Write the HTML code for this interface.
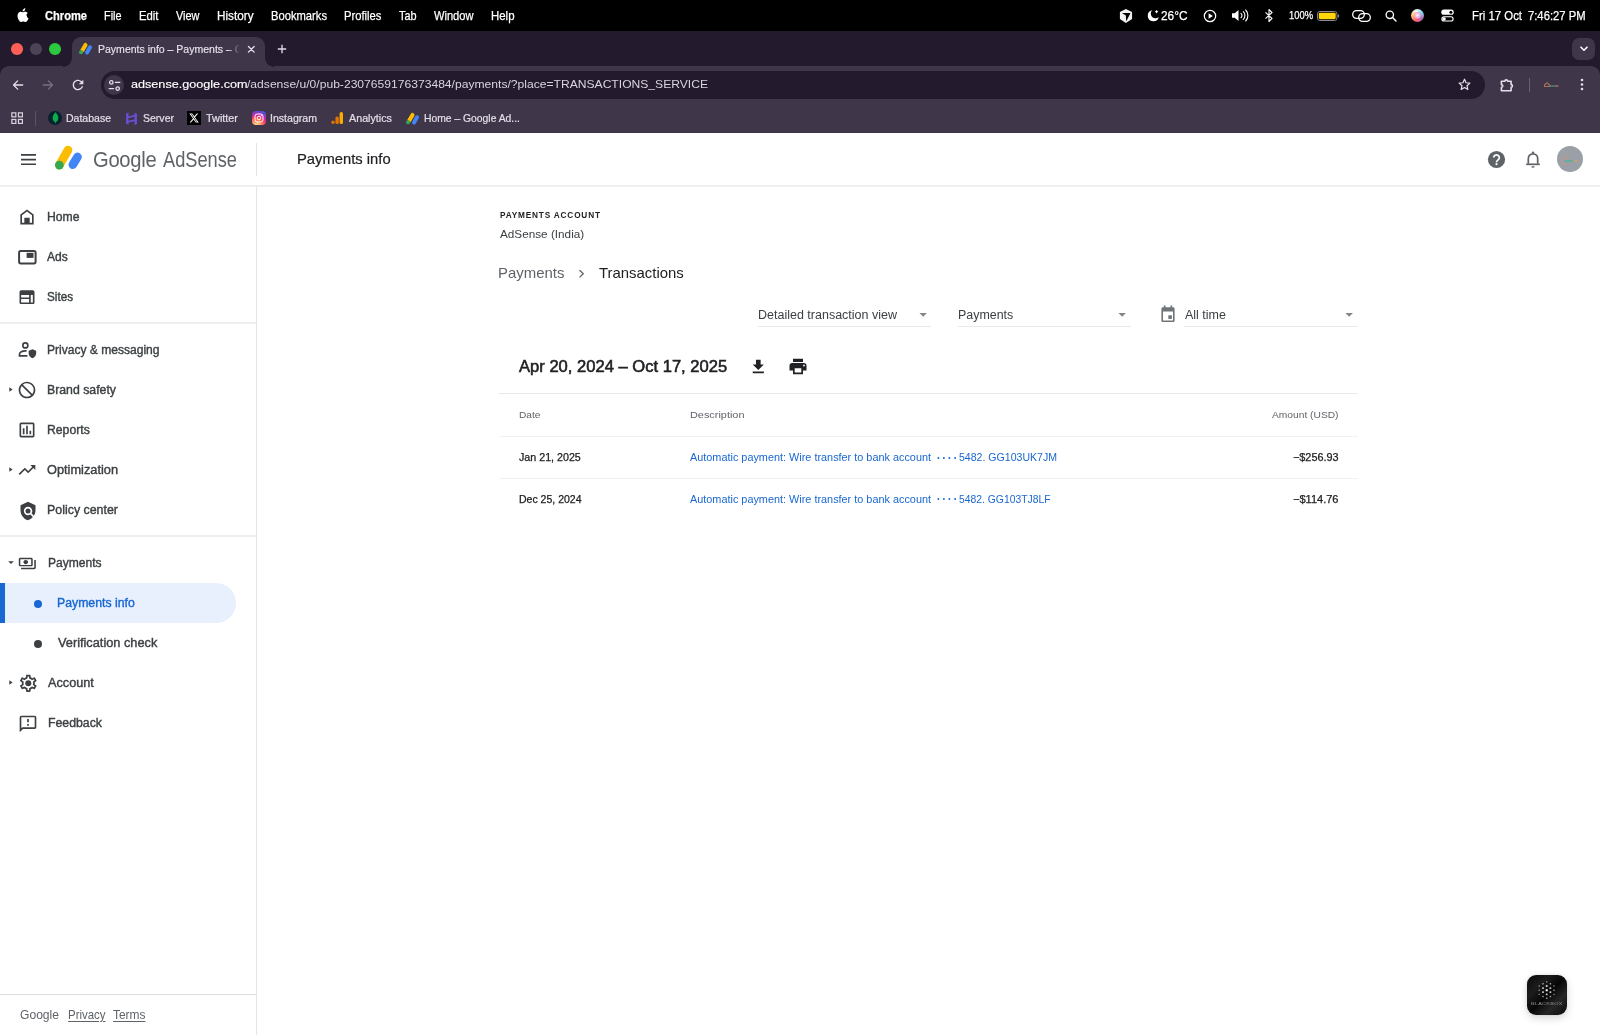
<!DOCTYPE html>
<html lang="en">
<head>
<meta charset="utf-8">
<title>Payments info – Payments – Google AdSense</title>
<style>
*{box-sizing:border-box;margin:0;padding:0}
html,body{width:1600px;height:1035px;overflow:hidden;background:#fff;will-change:transform;font-family:"Liberation Sans",sans-serif;color:#202124}
.abs{position:absolute}
.t{position:absolute;white-space:nowrap;line-height:1;transform-origin:0 50%}
/* mac menubar */
#menubar{position:absolute;left:0;top:0;width:1600px;height:31px;background:#000;color:#fff}
#menubar .t{font-size:13px;top:8.5px;color:#fff;-webkit-text-stroke:.25px #fff}
/* chrome */
#tabstrip{position:absolute;left:0;top:31px;width:1600px;height:36px;background:#231b2d}
#toolbar{position:absolute;left:0;top:66px;width:1600px;height:67px;background:#3f364a}
#tab{position:absolute;left:72px;top:37px;width:193px;height:30px;background:#3f364a;border-radius:9px 9px 0 0}
#url{position:absolute;left:100.500px;top:71px;width:1384.500px;height:28px;border-radius:14px;background:#231b2d}
/* page */
#page{position:absolute;left:0;top:133px;width:1600px;height:902px;background:#fff}
#header{position:absolute;left:0;top:0;width:1600px;height:53px;border-bottom:1px solid #e4e5e7;background:#fff}
#side{position:absolute;left:0;top:54px;width:257px;height:848px;border-right:1px solid #dadce0;background:#fff}
.nv{font-size:12.300px;-webkit-text-stroke:.38px currentColor}
.hr{position:absolute;left:0;width:256px;height:1px;background:#e0e1e4}
.ico{position:absolute}
</style>
</head>
<body>
<div id="menubar">
<svg class="abs" style="left:15px;top:7px" width="14" height="16" viewBox="0 0 14 17"><path fill="#fff" d="M11.6 9c0-1.7 1.4-2.5 1.5-2.6-.8-1.2-2.1-1.4-2.5-1.4-1.1-.1-2.1.6-2.6.6-.6 0-1.4-.6-2.3-.6C4.500 5 3.400 5.700 2.800 6.800c-1.300 2.200-.3 5.500.9 7.300.6.900 1.300 1.900 2.300 1.800.9 0 1.300-.6 2.400-.6s1.400.6 2.400.6 1.600-.9 2.200-1.800c.7-1 1-2 1-2.100-.1 0-1.900-.7-1.900-3zM9.800 3.600c.5-.6.800-1.400.7-2.300-.7 0-1.600.5-2.100 1.100-.5.500-.9 1.400-.8 2.200.8.100 1.700-.4 2.200-1z"/></svg>
<span class="t" style="transform:scaleX(0.8550);left:45px;font-weight:bold">Chrome</span>
<span class="t" style="transform:scaleX(0.8352);left:104px">File</span>
<span class="t" style="transform:scaleX(0.8703);left:139px">Edit</span>
<span class="t" style="transform:scaleX(0.8407);left:176px">View</span>
<span class="t" style="transform:scaleX(0.9023);left:217px">History</span>
<span class="t" style="transform:scaleX(0.8611);left:271px">Bookmarks</span>
<span class="t" style="transform:scaleX(0.8649);left:344px">Profiles</span>
<span class="t" style="transform:scaleX(0.8346);left:399px">Tab</span>
<span class="t" style="transform:scaleX(0.8541);left:434px">Window</span>
<span class="t" style="transform:scaleX(0.8785);left:491px">Help</span>
<span class="t" style="transform:scaleX(0.9123);left:1161px">26°C</span>
<span class="t" style="transform:scaleX(0.8529);left:1289px;font-size:11px;top:10px">100%</span>
<span class="t" style="transform:scaleX(0.8760);left:1472px">Fri 17 Oct</span>
<span class="t" style="transform:scaleX(0.8647);left:1528px">7:46:27 PM</span>

<svg class="abs" style="left:1118px;top:8px" width="16" height="16" viewBox="0 0 16 16"><path fill="#f2f2f2" d="M7.900.9 14.050 3.900v7.200L7.900 14.900 1.900 11.100V3.900z"/><path fill="#000" d="M3.950 5h8.600L8.200 13.400 7.850 7.400z"/></svg>
<svg class="abs" style="left:1147px;top:9px" width="13" height="13" viewBox="0 0 13 13"><path fill="#fff" d="M5.200 1.200A5.600 5.600 0 1 0 11.800 8 4.600 4.600 0 0 1 5.200 1.200z"/><path stroke="#fff" stroke-width="1" d="M9.600 1.200v3M8.100 2.700h3"/></svg>
<svg class="abs" style="left:1203px;top:8.500px" width="14" height="14" viewBox="0 0 14 14"><circle cx="7" cy="7" r="5.700" fill="none" stroke="#fff" stroke-width="1.200"/><path fill="#fff" d="M5.600 4.300v5.400L9.900 7z"/></svg>
<svg class="abs" style="left:1231px;top:8px" width="19" height="15" viewBox="0 0 19 15"><path fill="#fff" d="M1 5.300h2.700L7.500 2v11L3.700 9.700H1z"/><path fill="none" stroke="#fff" stroke-width="1.100" stroke-linecap="round" d="M10 5.300a3 3 0 0 1 0 4.400M12.300 3.600a5.500 5.500 0 0 1 0 7.800M14.700 2a8 8 0 0 1 0 11"/></svg>
<svg class="abs" style="left:1264px;top:8px" width="10" height="15" viewBox="0 0 10 15"><path fill="none" stroke="#fff" stroke-width="1.100" stroke-linejoin="round" d="M1.500 4.300 8 10.500 5 13.500v-12l3 3-6.500 6.200"/></svg>
<svg class="abs" style="left:1317px;top:10.500px" width="23" height="10" viewBox="0 0 23 10"><rect x=".5" y=".5" width="19.500" height="9" rx="2.500" fill="none" stroke="#8a8a8a" stroke-width="1"/><rect x="1.800" y="1.800" width="16.900" height="6.400" rx="1.400" fill="#ffd60a"/><path fill="#8a8a8a" d="M21 3.300c.8.200 1.200.8 1.200 1.700S21.800 6.500 21 6.700z"/></svg>
<svg class="abs" style="left:1352px;top:9.500px" width="19" height="12" viewBox="0 0 19 12"><rect x=".7" y=".7" width="11.600" height="7.600" rx="3.800" fill="none" stroke="#fff" stroke-width="1.300"/><rect x="6.700" y="3.700" width="11.600" height="7.600" rx="3.800" fill="none" stroke="#fff" stroke-width="1.300"/></svg>
<svg class="abs" style="left:1384.500px;top:9.500px" width="12" height="12" viewBox="0 0 12 12"><circle cx="4.800" cy="4.800" r="3.700" fill="none" stroke="#fff" stroke-width="1.300"/><path stroke="#fff" stroke-width="1.400" stroke-linecap="round" d="M7.600 7.600 11 11"/></svg>
<div class="abs" style="left:1410.500px;top:8.500px;width:13.500px;height:13.500px;border-radius:50%;background:conic-gradient(from 200deg,#ff5f6d,#ffc371,#f7f7f7,#7ad7f0,#b06ab3,#ff5f6d)"></div>
<div class="abs" style="left:1413.500px;top:11.500px;width:7.500px;height:7.500px;border-radius:50%;background:radial-gradient(#fff,#f4a6d7 60%,#f08 120%);opacity:.85"></div>
<svg class="abs" style="left:1441px;top:9px" width="13" height="13" viewBox="0 0 13 13"><rect x=".3" y=".6" width="12.400" height="5.200" rx="2.600" fill="#fff"/><circle cx="9.900" cy="3.200" r="1.500" fill="#000"/><rect x=".9" y="7.800" width="11.200" height="4.200" rx="2.100" fill="none" stroke="#fff" stroke-width="1.100"/><circle cx="3.100" cy="9.900" r="1.700" fill="#fff"/></svg>
</div>
<div id="tabstrip"></div>
<div id="toolbar"></div>
<div id="tab"></div>
<div class="abs" style="left:63px;top:58px;width:9px;height:9px;background:radial-gradient(circle at 0 0,#231b2d 8.500px,#3f364a 9px)"></div>
<div class="abs" style="left:265px;top:58px;width:9px;height:9px;background:radial-gradient(circle at 100% 0,#231b2d 8.500px,#3f364a 9px)"></div>
<div class="abs" style="left:0;top:66px;width:9px;height:9px;background:radial-gradient(circle at 100% 100%,#3f364a 8.500px,#231b2d 9px)"></div>
<div class="abs" style="left:1591px;top:66px;width:9px;height:9px;background:radial-gradient(circle at 0 100%,#3f364a 8.500px,#231b2d 9px)"></div>
<div class="abs" style="left:11.100px;top:43.400px;width:11.700px;height:11.700px;border-radius:50%;background:#fe5f57"></div>
<div class="abs" style="left:30px;top:43.400px;width:11.700px;height:11.700px;border-radius:50%;background:#4b4357"></div>
<div class="abs" style="left:49.200px;top:43.400px;width:11.700px;height:11.700px;border-radius:50%;background:#2bc840"></div>
<svg class="abs" style="left:77.5px;top:41px" width="15" height="15" viewBox="0 0 32 32"><path fill="#fbbc04" d="M19.800 6.400a4.300 4.300 0 0 0-7.500-4.200L4.700 15.400l7.400 4.300z" transform="translate(0,4)"/><circle cx="6.600" cy="24.200" r="4.300" fill="#34a853"/><path fill="#4285f4" d="M29.400 14.600a4.300 4.300 0 0 0-7.500-4.300l-6.400 11.200a4.300 4.300 0 0 0 7.500 4.300z" transform="translate(0,1)"/></svg>
<span class="t" style="transform:scaleX(0.9402);left:98px;top:43.500px;font-size:11.200px;color:#e8e4ee;-webkit-text-stroke:.15px #e8e4ee">Payments info – Payments – G</span>
<div class="abs" style="left:228px;top:38px;width:16px;height:24px;background:linear-gradient(90deg,rgba(63,54,74,0),#3f364a 75%)"></div>
<svg class="abs" style="left:247.300px;top:44.800px" width="8.600" height="8.600" viewBox="0 0 10 10"><path stroke="#e8e4ee" stroke-width="1.500" stroke-linecap="round" d="M1.700 1.700l6.600 6.600M8.300 1.700 1.700 8.300"/></svg>
<svg class="abs" style="left:276.800px;top:43.500px" width="10" height="10" viewBox="0 0 12 12"><path stroke="#e0dce6" stroke-width="1.600" d="M6 1v10M1 6h10"/></svg>
<div class="abs" style="left:1572px;top:37.500px;width:23px;height:22.500px;border-radius:7px;background:#3f364a"></div>
<svg class="abs" style="left:1578.500px;top:45px" width="10" height="8" viewBox="0 0 10 8"><path fill="none" stroke="#fff" stroke-width="1.600" stroke-linecap="round" stroke-linejoin="round" d="M2 2.200 5 5.200 8 2.200"/></svg>
<div id="url"></div>
<svg class="abs" style="left:12.300px;top:79px" width="12" height="12" viewBox="0 0 14 14"><path fill="none" stroke="#e3dfe8" stroke-width="1.500" stroke-linecap="round" stroke-linejoin="round" d="M12.500 7H2M6.600 2.200 1.800 7l4.800 4.800"/></svg>
<svg class="abs" style="left:42px;top:79px" width="12" height="12" viewBox="0 0 14 14"><path fill="none" stroke="#776f83" stroke-width="1.500" stroke-linecap="round" stroke-linejoin="round" d="M1.500 7H12M7.400 2.200 12.200 7l-4.800 4.800"/></svg>
<svg class="abs" style="left:70.300px;top:77px" width="16" height="16" viewBox="0 0 24 24"><path fill="#e3dfe8" d="M17.650 6.350A7.960 7.960 0 0 0 12 4c-4.420 0-7.990 3.580-7.990 8s3.570 8 7.990 8c3.730 0 6.840-2.550 7.730-6h-2.080A5.990 5.990 0 0 1 12 18c-3.310 0-6-2.690-6-6s2.690-6 6-6c1.660 0 3.140.69 4.220 1.780L13 11h7V4z"/></svg>
<div class="abs" style="left:104px;top:75.300px;width:20px;height:20px;border-radius:50%;background:#3f364a"></div>
<svg class="abs" style="left:108px;top:78.500px" width="13" height="13" viewBox="0 0 13 13"><g fill="none" stroke="#e3dfe8" stroke-width="1.300" stroke-linecap="round"><circle cx="3.300" cy="3.400" r="1.700"/><path d="M7.400 3.400h4.400M1.200 9.600h4.400"/><circle cx="9.700" cy="9.600" r="1.700"/></g></svg>
<span class="t" style="transform:scaleX(1.0700);left:130.500px;top:79px;font-size:11.800px;color:#fff;-webkit-text-stroke:.15px #fff">adsense.google.com</span>
<span class="t" style="transform:scaleX(1.0260);left:247.300px;top:79px;font-size:11.800px;color:#d9d4e0">/adsense/u/0/pub-2307659176373484/payments/?place=TRANSACTIONS_SERVICE</span>
<svg class="abs" style="left:1457.300px;top:76.900px" width="15" height="15" viewBox="0 0 24 24"><path fill="none" stroke="#e3dfe8" stroke-width="2" stroke-linejoin="round" d="M12 3.600l2.500 5.600 6.100.6-4.600 4.100 1.300 6-5.300-3.100-5.300 3.100 1.300-6-4.600-4.100 6.100-.6z"/></svg>
<svg class="abs" style="left:1499px;top:76.600px" width="16" height="16" viewBox="0 0 16 16"><path fill="none" stroke="#e3dfe8" stroke-width="1.600" stroke-linejoin="round" d="M2.400 4.200h3.500a1.350 1.350 0 1 1 2.700 0h3.500v3.400a1.350 1.350 0 1 1 0 2.700v3.500H2.400v-3.500a1.350 1.350 0 0 0 0-2.700z"/></svg>
<div class="abs" style="left:1528.500px;top:78px;width:1px;height:13.500px;background:#675e73"></div>
<svg class="abs" style="left:1543px;top:80px;opacity:.75" width="17" height="10" viewBox="0 0 17 10"><path fill="none" stroke="#d9855a" stroke-width="1.100" d="M1.500 6.500V5l2.500-2.300L6.500 5v1.500z"/><path stroke="#3dbfa0" stroke-width="1.200" d="M6.500 6h5"/><path stroke="#d9a05a" stroke-width="1.200" d="M11.500 6h4"/></svg>
<svg class="abs" style="left:1579.500px;top:78px" width="4" height="13" viewBox="0 0 4 13"><g fill="#e3dfe8"><circle cx="2" cy="2" r="1.300"/><circle cx="2" cy="6.500" r="1.300"/><circle cx="2" cy="11" r="1.300"/></g></svg>
<svg class="abs" style="left:10.700px;top:112.200px" width="12.300" height="12.300" viewBox="0 0 13 13"><g fill="none" stroke="#d8d3df" stroke-width="1.300"><rect x=".9" y=".9" width="4.200" height="4.200"/><rect x="7.900" y=".9" width="4.200" height="4.200"/><rect x=".9" y="7.900" width="4.200" height="4.200"/><rect x="7.900" y="7.900" width="4.200" height="4.200"/></g></svg>
<div class="abs" style="left:35px;top:111px;width:1px;height:15px;background:#5d546a"></div>
<div class="abs" style="left:48px;top:110.500px;width:14px;height:14px;border-radius:50%;background:#04232d"></div>
<svg class="abs" style="left:51.500px;top:111.500px" width="7" height="12" viewBox="0 0 7 12"><path fill="#10aa50" d="M3.500.3C5.300 2.300 6.300 4 6.300 6.100c0 2-1.100 3.400-2.500 4.100l-.2 1.500h-.3l-.2-1.500C1.700 9.500.7 8.100.7 6.100.7 4 1.700 2.300 3.500.3z"/></svg>
<span class="t" style="transform:scaleX(0.9555);left:66px;top:113.300px;font-size:11px;color:#e3dfe8;-webkit-text-stroke:.2px #e3dfe8">Database</span>
<svg class="abs" style="left:125.300px;top:111.500px" width="13" height="13.500" viewBox="0 0 12 14" preserveAspectRatio="none"><path fill="#6a4fd6" d="M1 1.500 3.200.5v4l5.600-1.500V.8L11 1.800v10.700l-2.200 1v-4L3.200 11v2.200L1 12.200z"/><path fill="#3f364a" d="M3.200 6.300 8.800 4.800v2.900L3.200 9.200z"/></svg>
<span class="t" style="transform:scaleX(0.9566);left:143px;top:113.300px;font-size:11px;color:#e3dfe8;-webkit-text-stroke:.2px #e3dfe8">Server</span>
<div class="abs" style="left:187px;top:111px;width:14px;height:14px;background:#000"></div>
<svg class="abs" style="left:189px;top:113px" width="10" height="10" viewBox="0 0 10 10"><path fill="#fff" d="M.3.400h2.900l2.100 2.900L7.900.4h1.300L5.900 4.200l3.800 5.400H6.800L4.600 6.500 1.900 9.600H.6l3.400-4zM2 1.300l5.300 7.400h.8L2.800 1.300z"/></svg>
<span class="t" style="transform:scaleX(0.9875);left:206px;top:113.300px;font-size:11px;color:#e3dfe8;-webkit-text-stroke:.2px #e3dfe8">Twitter</span>
<div class="abs" style="left:251.500px;top:111px;width:14px;height:14px;border-radius:4px;background:radial-gradient(circle at 30% 110%,#fdf497 0,#fd5949 45%,#d6249f 60%,#285aeb 95%)"></div>
<svg class="abs" style="left:253.500px;top:113px" width="10" height="10" viewBox="0 0 10 10"><rect x="1" y="1" width="8" height="8" rx="2.400" fill="none" stroke="#fff" stroke-width="1"/><circle cx="5" cy="5" r="1.800" fill="none" stroke="#fff" stroke-width="1"/><circle cx="7.300" cy="2.700" r=".6" fill="#fff"/></svg>
<span class="t" style="transform:scaleX(0.9607);left:270px;top:113.300px;font-size:11px;color:#e3dfe8;-webkit-text-stroke:.2px #e3dfe8">Instagram</span>
<svg class="abs" style="left:331px;top:111px" width="13" height="14" viewBox="0 0 13 14"><rect x="8.600" y="1" width="3.400" height="12" rx="1.600" fill="#f9ab00"/><rect x="4.400" y="5.500" width="3.400" height="7.500" rx="1.600" fill="#e37400"/><circle cx="2" cy="11.300" r="1.700" fill="#e37400"/></svg>
<span class="t" style="transform:scaleX(0.9766);left:349px;top:113.300px;font-size:11px;color:#e3dfe8;-webkit-text-stroke:.2px #e3dfe8">Analytics</span>
<svg class="abs" style="left:405px;top:110.5px" width="15" height="15" viewBox="0 0 32 32"><path fill="#fbbc04" d="M19.800 6.400a4.300 4.300 0 0 0-7.500-4.200L4.700 15.400l7.400 4.300z" transform="translate(0,4)"/><circle cx="6.600" cy="24.200" r="4.300" fill="#34a853"/><path fill="#4285f4" d="M29.400 14.600a4.300 4.300 0 0 0-7.500-4.300l-6.400 11.200a4.300 4.300 0 0 0 7.500 4.300z" transform="translate(0,1)"/></svg>
<span class="t" style="transform:scaleX(0.9400);left:424px;top:113.300px;font-size:11px;color:#e3dfe8;-webkit-text-stroke:.2px #e3dfe8">Home – Google Ad...</span>
<div id="page"></div>
<div class="abs" style="left:0;top:185px;width:1600px;height:2px;background:#efeff0"></div>
<div class="abs" style="left:256px;top:143px;width:1px;height:33px;background:#e3e4e7"></div>
<div class="abs" style="left:256px;top:187px;width:1px;height:848px;background:#e4e5e7"></div>
<!-- header -->
<svg class="abs" style="left:20.700px;top:154px" width="15.200" height="11.200" viewBox="0 0 15.200 11.200"><path stroke="#3c4043" stroke-width="1.700" d="M0 .9h15.200M0 5.600h15.200M0 10.300h15.200"/></svg>
<svg class="abs" style="left:50px;top:140px" width="40" height="36" viewBox="50 140 40 36"><path d="M59.350 165.050 68 150.050" stroke="#fbbc04" stroke-width="8.700" stroke-linecap="round"/><circle cx="59.350" cy="165.050" r="4.350" fill="#34a853"/><path d="M72.900 164.650 77.500 156.900" stroke="#4285f4" stroke-width="8.700" stroke-linecap="round"/></svg>
<span class="t" style="transform:scaleX(0.9436);left:92.9px;top:149.800px;font-size:21.4px;color:#5f6368;letter-spacing:-.3px">Google</span>
<span class="t" style="transform:scaleX(0.8523);left:162.8px;top:149.800px;font-size:21.4px;color:#5f6368">AdSense</span>
<span class="t" style="transform:scaleX(1.0332);left:296.6px;top:152.2px;font-size:14.3px;color:#202124;-webkit-text-stroke:.2px #202124">Payments info</span>
<svg class="abs" style="left:1487px;top:150px" width="19" height="19" viewBox="0 0 19 19"><circle cx="9.500" cy="9.500" r="8.600" fill="#5f6368"/><path fill="none" stroke="#fff" stroke-width="1.700" d="M6.700 7.600a2.800 2.800 0 1 1 4.300 2.400c-1 .7-1.500 1.100-1.500 2.300"/><circle cx="9.500" cy="14.200" r="1.100" fill="#fff"/></svg>
<svg class="abs" style="left:1525px;top:150px" width="16" height="19" viewBox="0 0 16 19"><path fill="none" stroke="#5f6368" stroke-width="1.700" stroke-linejoin="round" d="M3.300 13.800V8.500a4.700 4.700 0 0 1 9.400 0v5.300"/><path stroke="#5f6368" stroke-width="1.700" d="M1.200 14.300h13.600"/><circle cx="8" cy="2.600" r="1.200" fill="#5f6368"/><path fill="#5f6368" d="M6.300 16.200h3.400A1.700 1.700 0 0 1 8 17.800a1.700 1.700 0 0 1-1.700-1.600z"/></svg>
<div class="abs" style="left:1556.900px;top:146.200px;width:26.200px;height:26.200px;border-radius:50%;background:#9a9fa8"></div>
<svg class="abs" style="left:1560px;top:152px;opacity:.75" width="20" height="14" viewBox="0 0 20 14"><path fill="none" stroke="#c9957c" stroke-width="1.200" d="M1.500 10V7.500l3.500-3.500 3.500 3.500"/><path stroke="#c9957c" stroke-width="1.200" d="M1 11.500h5"/><path stroke="#4fb3a2" stroke-width="1.800" d="M4.500 9h8.500"/><path stroke="#c9a36a" stroke-width="1.800" d="M13 9h5"/></svg>
<!-- sidebar -->
<div class="abs" style="left:0;top:322px;width:256px;height:2px;background:#eeeef0"></div>
<div class="abs" style="left:0;top:535px;width:256px;height:2px;background:#eeeef0"></div>
<div class="abs" style="left:0;top:994px;width:256px;height:1px;background:#dcdde0"></div>
<div class="abs" style="left:0;top:583px;width:236px;height:40px;border-radius:0 20px 20px 0;background:#e8f0fe"></div>
<div class="abs" style="left:0;top:583px;width:4.500px;height:40px;background:#1967d2"></div>
<div class="abs" style="left:33.500px;top:599.800px;width:8px;height:8px;border-radius:50%;background:#1967d2"></div>
<div class="abs" style="left:33.500px;top:639.800px;width:8px;height:8px;border-radius:50%;background:#3c4043"></div>
<span class="t nv" style="transform:scaleX(0.9905);left:47px;top:210.5px;color:#3c4043">Home</span>
<span class="t nv" style="transform:scaleX(0.9810);left:47.2px;top:250.5px;color:#3c4043">Ads</span>
<span class="t nv" style="transform:scaleX(0.9509);left:47.1px;top:290.5px;color:#3c4043">Sites</span>
<span class="t nv" style="transform:scaleX(0.9797);left:47.4px;top:343.5px;color:#3c4043">Privacy &amp; messaging</span>
<span class="t nv" style="transform:scaleX(0.9993);left:47.4px;top:383.5px;color:#3c4043">Brand safety</span>
<span class="t nv" style="transform:scaleX(0.9939);left:47.4px;top:423.5px;color:#3c4043">Reports</span>
<span class="t nv" style="transform:scaleX(1.0389);left:47.4px;top:463.5px;color:#3c4043">Optimization</span>
<span class="t nv" style="transform:scaleX(1.0084);left:47.4px;top:503.5px;color:#3c4043">Policy center</span>
<span class="t nv" style="transform:scaleX(0.9801);left:47.9px;top:556.5px;color:#3c4043">Payments</span>
<span class="t nv" style="transform:scaleX(0.9972);left:56.5px;top:596.5px;color:#1967d2">Payments info</span>
<span class="t nv" style="transform:scaleX(1.0376);left:57.7px;top:636.5px;color:#3c4043">Verification check</span>
<span class="t nv" style="transform:scaleX(1.0329);left:47.6px;top:676.5px;color:#3c4043">Account</span>
<span class="t nv" style="transform:scaleX(0.9997);left:47.9px;top:716.5px;color:#3c4043">Feedback</span>
<span class="t" style="transform:scaleX(0.8956);left:19.700px;top:1007.500px;font-size:13.500px;color:#5f6368">Google</span>
<span class="t" style="transform:scaleX(0.8798);left:67.500px;top:1007.500px;font-size:13px;color:#5f6368;text-decoration:underline;text-underline-offset:2px">Privacy</span>
<span class="t" style="transform:scaleX(0.9183);left:113px;top:1007.500px;font-size:13px;color:#5f6368;text-decoration:underline;text-underline-offset:2px">Terms</span>
<!-- nav icons -->
<svg class="abs" style="left:16.800px;top:207.100px" width="20" height="20" viewBox="0 0 24 24" fill="#3c4043"><path d="M12 3 4 9v12h16V9zm6 16h-3v-6H9v6H6v-9l6-4.500 6 4.500z"/><path d="M9 13h6v6H9z" opacity="0"/><path d="M10.500 14.500h3V19h-3z" opacity="0"/><path d="M9.200 13.200h5.600V20H9.200z"/></svg>
<svg class="abs" style="left:17px;top:249px" width="21" height="17" viewBox="0 0 21 17"><rect x="2.100" y="2" width="16.500" height="12.400" rx="1.600" fill="none" stroke="#3c4043" stroke-width="2"/><rect x="9.600" y="3.800" width="6.900" height="5.100" fill="#3c4043"/></svg>
<svg class="abs" style="left:17px;top:287.3px" width="20" height="20" viewBox="0 0 24 24" fill="#3c4043"><path d="M19 4H5c-1.100 0-2 .9-2 2v12.500c0 1.100.9 2 2 2h14c1.100 0 2-.9 2-2V6c0-1.100-.9-2-2-2zm-4.500 14.500H5v-4h9.500zm0-6H5v-3h9.500zm4.500 6h-2.500v-9H19z"/></svg>
<svg class="abs" style="left:17px;top:339.8px" width="20" height="20" viewBox="0 0 24 24" fill="#3c4043"><circle cx="10" cy="6.500" r="3" fill="none" stroke="#3c4043" stroke-width="2"/><path fill="none" stroke="#3c4043" stroke-width="2" d="M11.500 13.100c-.5-.1-1-.1-1.500-.1-3.600 0-7 1.700-7 4v2h9.500"/><path d="M18.500 11.200 14 13v3c0 2.700 1.900 5.200 4.500 5.800 2.600-.6 4.500-3.100 4.500-5.800v-3z"/></svg>
<svg class="abs" style="left:8.800px;top:386.7px" width="4" height="5" viewBox="0 0 4 5"><path fill="#3c4043" d="M.3.200 3.600 2.500.3 4.800z"/></svg>
<svg class="abs" style="left:17px;top:380.3px" width="20" height="20" viewBox="0 0 24 24" fill="#3c4043"><g transform="translate(24,0) scale(-1,1)"><path d="M12 2C6.480 2 2 6.480 2 12s4.480 10 10 10 10-4.480 10-10S17.520 2 12 2zM4 12c0-4.420 3.580-8 8-8 1.850 0 3.550.63 4.900 1.690L5.690 16.900A7.900 7.900 0 0 1 4 12zm8 8c-1.850 0-3.550-.63-4.900-1.690L18.310 7.100A7.900 7.900 0 0 1 20 12c0 4.420-3.580 8-8 8z"/></g></svg>
<svg class="abs" style="left:17px;top:420.3px" width="20" height="20" viewBox="0 0 24 24" fill="#3c4043"><path d="M9 17H7v-7h2zm4 0h-2V7h2zm4 0h-2v-4h2zm2 2H5V5h14zm0-16H5c-1.100 0-2 .9-2 2v14c0 1.100.9 2 2 2h14c1.100 0 2-.9 2-2V5c0-1.100-.9-2-2-2z"/></svg>
<svg class="abs" style="left:8.800px;top:466.7px" width="4" height="5" viewBox="0 0 4 5"><path fill="#3c4043" d="M.3.200 3.600 2.500.3 4.800z"/></svg>
<svg class="abs" style="left:17.400px;top:460.300px" width="20" height="20" viewBox="0 0 24 24" fill="#3c4043"><path d="M16 6l2.290 2.290-4.880 4.880-4-4L2 16.590 3.410 18l6-6 4 4 6.300-6.290L22 12V6z"/></svg>
<svg class="abs" style="left:17.600px;top:500.600px" width="20" height="20" viewBox="0 0 24 24" fill="#3c4043"><path d="M21 5l-9-4-9 4v6c0 5.550 3.840 10.740 9 12 2.300-.56 4.330-1.900 5.880-3.710l-3.120-3.120a5 5 0 0 1-6.290-.64 5 5 0 0 1 0-7.070 5 5 0 0 1 7.070 0 5 5 0 0 1 .64 6.290l2.900 2.900C20.290 15.690 21 13.380 21 11z"/><circle cx="12" cy="12" r="3"/></svg>
<svg class="abs" style="left:7.800px;top:560.800px" width="6" height="3" viewBox="0 0 6 3"><path fill="#3c4043" d="M.2.200h5.600L3 2.900z"/></svg>
<svg class="abs" style="left:18.300px;top:554.900px" width="18.600" height="17" viewBox="0 0 24 24" preserveAspectRatio="none" fill="#3c4043"><path d="M19 14V6c0-1.100-.9-2-2-2H3c-1.100 0-2 .9-2 2v8c0 1.100.9 2 2 2h14c1.100 0 2-.9 2-2zm-2 0H3V6h14zm-7-7c-1.660 0-3 1.340-3 3s1.340 3 3 3 3-1.340 3-3-1.340-3-3-3zm13 0v11c0 1.100-.9 2-2 2H4v-2h17V7z"/></svg>
<svg class="abs" style="left:8.800px;top:679.7px" width="4" height="5" viewBox="0 0 4 5"><path fill="#3c4043" d="M.3.200 3.600 2.500.3 4.800z"/></svg>
<svg class="abs" style="left:17.500px;top:672.900px" width="20.600" height="20.600" viewBox="0 0 24 24" fill="#3c4043"><path d="M19.430 12.980c.04-.32.07-.64.07-.98s-.03-.66-.07-.98l2.110-1.650c.19-.15.240-.42.120-.64l-2-3.460a.5.500 0 0 0-.61-.22l-2.490 1c-.52-.4-1.080-.73-1.690-.98l-.38-2.650A.49.490 0 0 0 14 2h-4c-.25 0-.46.180-.49.420l-.38 2.650c-.61.250-1.170.59-1.690.98l-2.490-1a.5.500 0 0 0-.61.220l-2 3.460c-.13.220-.07.49.12.640l2.110 1.650c-.04.32-.07.650-.07.980s.03.660.07.980l-2.110 1.650c-.19.150-.24.420-.12.640l2 3.460c.12.220.39.300.61.220l2.490-1c.52.400 1.080.73 1.690.98l.38 2.650c.03.240.24.420.49.420h4c.25 0 .46-.18.490-.42l.38-2.650c.61-.25 1.170-.59 1.690-.98l2.490 1c.23.090.49 0 .61-.22l2-3.460c.12-.22.07-.49-.12-.64zm-1.980-1.710c.04.31.05.52.05.73s-.02.430-.05.730l-.14 1.130.89.700 1.080.84-.70 1.210-1.270-.51-1.040-.42-.90.680c-.43.320-.84.560-1.250.73l-1.060.43-.16 1.130-.20 1.350h-1.400l-.19-1.350-.16-1.130-1.060-.43c-.43-.18-.83-.41-1.230-.71l-.91-.70-1.060.43-1.270.51-.70-1.210 1.080-.84.89-.70-.14-1.130c-.03-.31-.05-.54-.05-.74s.02-.43.050-.73l.14-1.130-.89-.70-1.080-.84.70-1.210 1.270.51 1.040.42.900-.68c.43-.32.84-.56 1.250-.73l1.060-.43.160-1.130.20-1.350h1.390l.19 1.350.16 1.130 1.060.43c.43.180.83.410 1.230.71l.91.70 1.060-.43 1.270-.51.70 1.210-1.070.85-.89.700z"/><circle cx="12" cy="12" r="3.500"/></svg>
<svg class="abs" style="left:17.800px;top:714.300px" width="20" height="20" viewBox="0 0 24 24" fill="#3c4043"><path d="M20 2H4c-1.100 0-2 .9-2 2v18l4-4h14c1.100 0 2-.9 2-2V4c0-1.100-.9-2-2-2zm0 14H5.170L4 17.170V4h16zm-9-4h2v2h-2zm0-6h2v4h-2z"/></svg>
<!-- main -->
<span class="t" style="transform:scaleX(0.8674);left:500.2px;top:209.96px;font-size:9.5px;letter-spacing:.95px;color:#202124;font-weight:bold">PAYMENTS ACCOUNT</span>
<span class="t" style="transform:scaleX(1.0873);left:500.2px;top:229.16px;font-size:10.8px;color:#3c4043">AdSense (India)</span>
<span class="t" style="transform:scaleX(1.0750);left:498.300px;top:266.700px;font-size:13.900px;color:#5f6368">Payments</span>
<svg class="abs" style="left:577px;top:267.500px" width="9" height="12" viewBox="0 0 9 12"><path fill="none" stroke="#5f6368" stroke-width="1.300" d="M2.500 2.200 6.300 5.800 2.500 9.400"/></svg>
<span class="t" style="transform:scaleX(1.0732);left:598.800px;top:266.700px;font-size:13.900px;color:#202124">Transactions</span>
<span class="t" style="transform:scaleX(1.0419);left:758.400px;top:309.400px;font-size:12px;color:#202124;color:#3c4043">Detailed transaction view</span>
<svg class="abs" style="left:918.8px;top:313.200px" width="8.400" height="4.200" viewBox="0 0 9 5"><path fill="#80868b" d="M0 0h9L4.500 4.500z"/></svg>
<div class="abs" style="left:757.500px;top:325.500px;width:173.500px;height:1px;background:#e8e9eb"></div>
<span class="t" style="transform:scaleX(1.0364);left:958.200px;top:309.400px;font-size:12px;color:#3c4043">Payments</span>
<svg class="abs" style="left:1118.3px;top:313.200px" width="8.400" height="4.200" viewBox="0 0 9 5"><path fill="#80868b" d="M0 0h9L4.500 4.500z"/></svg>
<div class="abs" style="left:957.500px;top:325.500px;width:173.500px;height:1px;background:#e8e9eb"></div>
<svg class="abs" style="left:1160px;top:305px" width="16" height="18" viewBox="0 0 16 18"><path fill="#70757a" d="M13 2.200h-.8V.6h-1.700v1.600h-5V.6H3.800v1.600H3c-.9 0-1.600.7-1.600 1.600v11.600c0 .9.700 1.600 1.600 1.600h10c.9 0 1.600-.7 1.600-1.600V3.800c0-.9-.7-1.600-1.600-1.600zm0 13.200H3V6.400h10z"/><rect x="8.300" y="10.300" width="3.600" height="3.600" fill="#70757a"/></svg>
<span class="t" style="transform:scaleX(1.0421);left:1185.400px;top:309.400px;font-size:12px;color:#202124;color:#3c4043">All time</span>
<svg class="abs" style="left:1344.8px;top:313.200px" width="8.400" height="4.200" viewBox="0 0 9 5"><path fill="#80868b" d="M0 0h9L4.500 4.500z"/></svg>
<div class="abs" style="left:1184px;top:325.500px;width:173.500px;height:1px;background:#e8e9eb"></div>
<span class="t" style="transform:scaleX(1.0177);left:518.9px;top:358.200px;font-size:16.3px;color:#202124;-webkit-text-stroke:.55px #202124">Apr 20, 2024 – Oct 17, 2025</span>
<svg class="abs" style="left:750.700px;top:358.700px" width="14.600" height="15.200" viewBox="0 0 14 15"><path fill="#202124" d="M12.500 5.400H9.300V.800H4.700v4.600H1.500L7 10.900zM1.500 12.400V14h11v-1.600z"/></svg>
<svg class="abs" style="left:789px;top:358.100px" width="18" height="17" viewBox="0 0 18 17"><path fill="#202124" d="M15 5H3C1.600 5 .5 6.100.5 7.500v5H4v3.700h10v-3.700h3.500v-5C17.500 6.100 16.400 5 15 5zm-2.700 9.500H5.700v-4.300h6.600zM15 8.400a.9.900 0 1 1 0-1.800.9.900 0 0 1 0 1.800zM14 .800H4v3.300h10z"/></svg>
<div class="abs" style="left:498.500px;top:393px;width:859px;height:1px;background:#e8eaed"></div>
<div class="abs" style="left:498.500px;top:436px;width:859px;height:1px;background:#f0f1f3"></div>
<div class="abs" style="left:498.500px;top:477.500px;width:859px;height:1px;background:#f0f1f3"></div>
<span class="t" style="transform:scaleX(1.0307);left:518.600px;top:410.02px;font-size:9.9px;color:#5f6368">Date</span>
<span class="t" style="transform:scaleX(1.1031);left:690.300px;top:410.02px;font-size:9.9px;color:#5f6368">Description</span>
<span class="t" style="transform:scaleX(1.0358);left:1271.800px;top:410.02px;font-size:9.9px;color:#5f6368">Amount (USD)</span>
<span class="t" style="transform:scaleX(1.0284);left:518.600px;top:453.1px;font-size:10.4px;color:#202124;-webkit-text-stroke:.25px #202124">Jan 21, 2025</span>
<span class="t" style="transform:scaleX(1.0458);left:690.300px;top:453.1px;font-size:10.400px;color:#1967d2">Automatic payment: Wire transfer to bank account</span>
<span class="t" style="left:937.200px;top:454.600px;font-size:6.500px;color:#1967d2;letter-spacing:3.300px">••••</span>
<span class="t" style="transform:scaleX(1.0159);left:959px;top:453.1px;font-size:10.4px;color:#1967d2">5482. GG103UK7JM</span>
<span class="t" style="transform:scaleX(1.0426);left:1292.600px;top:453.1px;font-size:10.4px;color:#202124;-webkit-text-stroke:.25px #202124">−$256.93</span>
<span class="t" style="transform:scaleX(1.0111);left:518.600px;top:494.9px;font-size:10.4px;color:#202124;-webkit-text-stroke:.25px #202124">Dec 25, 2024</span>
<span class="t" style="transform:scaleX(1.0458);left:690.300px;top:494.9px;font-size:10.400px;color:#1967d2">Automatic payment: Wire transfer to bank account</span>
<span class="t" style="left:937.200px;top:496.400px;font-size:6.500px;color:#1967d2;letter-spacing:3.300px">••••</span>
<span class="t" style="transform:scaleX(0.9963);left:959px;top:494.9px;font-size:10.4px;color:#1967d2">5482. GG103TJ8LF</span>
<span class="t" style="transform:scaleX(1.0616);left:1292.600px;top:494.9px;font-size:10.4px;color:#202124;-webkit-text-stroke:.25px #202124">−$114.76</span>
<!-- blackbox -->
<div class="abs" style="left:1527px;top:975px;width:40px;height:40px;border-radius:9px;background:linear-gradient(135deg,#0a0a0a 0%,#1c1c1c 28%,#070707 50%,#262626 72%,#0a0a0a 100%);box-shadow:0 3px 8px rgba(0,0,0,.16),0 0 3px rgba(0,0,0,.08)"></div>
<svg class="abs" style="left:1527px;top:975px" width="40" height="40" viewBox="0 0 40 40"><rect x="11.52" y="10.32" width="1.35" height="1.35" rx=".3" fill="#fff" opacity="0.50"/><rect x="11.48" y="14.48" width="1.43" height="1.43" rx=".3" fill="#fff" opacity="0.55"/><rect x="11.52" y="18.72" width="1.35" height="1.35" rx=".3" fill="#fff" opacity="0.50"/><rect x="15.25" y="8.05" width="1.49" height="1.49" rx=".3" fill="#fff" opacity="0.60"/><rect x="15.13" y="12.23" width="1.73" height="1.73" rx=".3" fill="#fff" opacity="0.75"/><rect x="15.13" y="16.23" width="1.74" height="1.74" rx=".3" fill="#fff" opacity="0.76"/><rect x="15.25" y="20.85" width="1.49" height="1.49" rx=".3" fill="#fff" opacity="0.60"/><rect x="18.98" y="6.18" width="1.44" height="1.44" rx=".3" fill="#fff" opacity="0.56"/><rect x="18.82" y="10.12" width="1.77" height="1.77" rx=".3" fill="#fff" opacity="0.78"/><rect x="18.65" y="14.15" width="2.10" height="2.10" rx=".3" fill="#fff" opacity="1.00"/><rect x="18.82" y="18.52" width="1.77" height="1.77" rx=".3" fill="#fff" opacity="0.78"/><rect x="18.97" y="22.47" width="1.46" height="1.46" rx=".3" fill="#fff" opacity="0.58"/><rect x="22.65" y="8.05" width="1.49" height="1.49" rx=".3" fill="#fff" opacity="0.60"/><rect x="22.53" y="12.23" width="1.73" height="1.73" rx=".3" fill="#fff" opacity="0.75"/><rect x="22.53" y="16.23" width="1.74" height="1.74" rx=".3" fill="#fff" opacity="0.76"/><rect x="22.65" y="20.85" width="1.49" height="1.49" rx=".3" fill="#fff" opacity="0.60"/><rect x="26.32" y="10.32" width="1.37" height="1.37" rx=".3" fill="#fff" opacity="0.51"/><rect x="26.28" y="14.48" width="1.45" height="1.45" rx=".3" fill="#fff" opacity="0.57"/><rect x="26.32" y="18.72" width="1.37" height="1.37" rx=".3" fill="#fff" opacity="0.51"/></svg>
<span class="t" style="transform:scaleX(1.2499);left:1530.900px;top:1002.100px;font-size:4.400px;color:#8f8f8f;letter-spacing:.2px">BLACKBOX</span>
</body>
</html>
